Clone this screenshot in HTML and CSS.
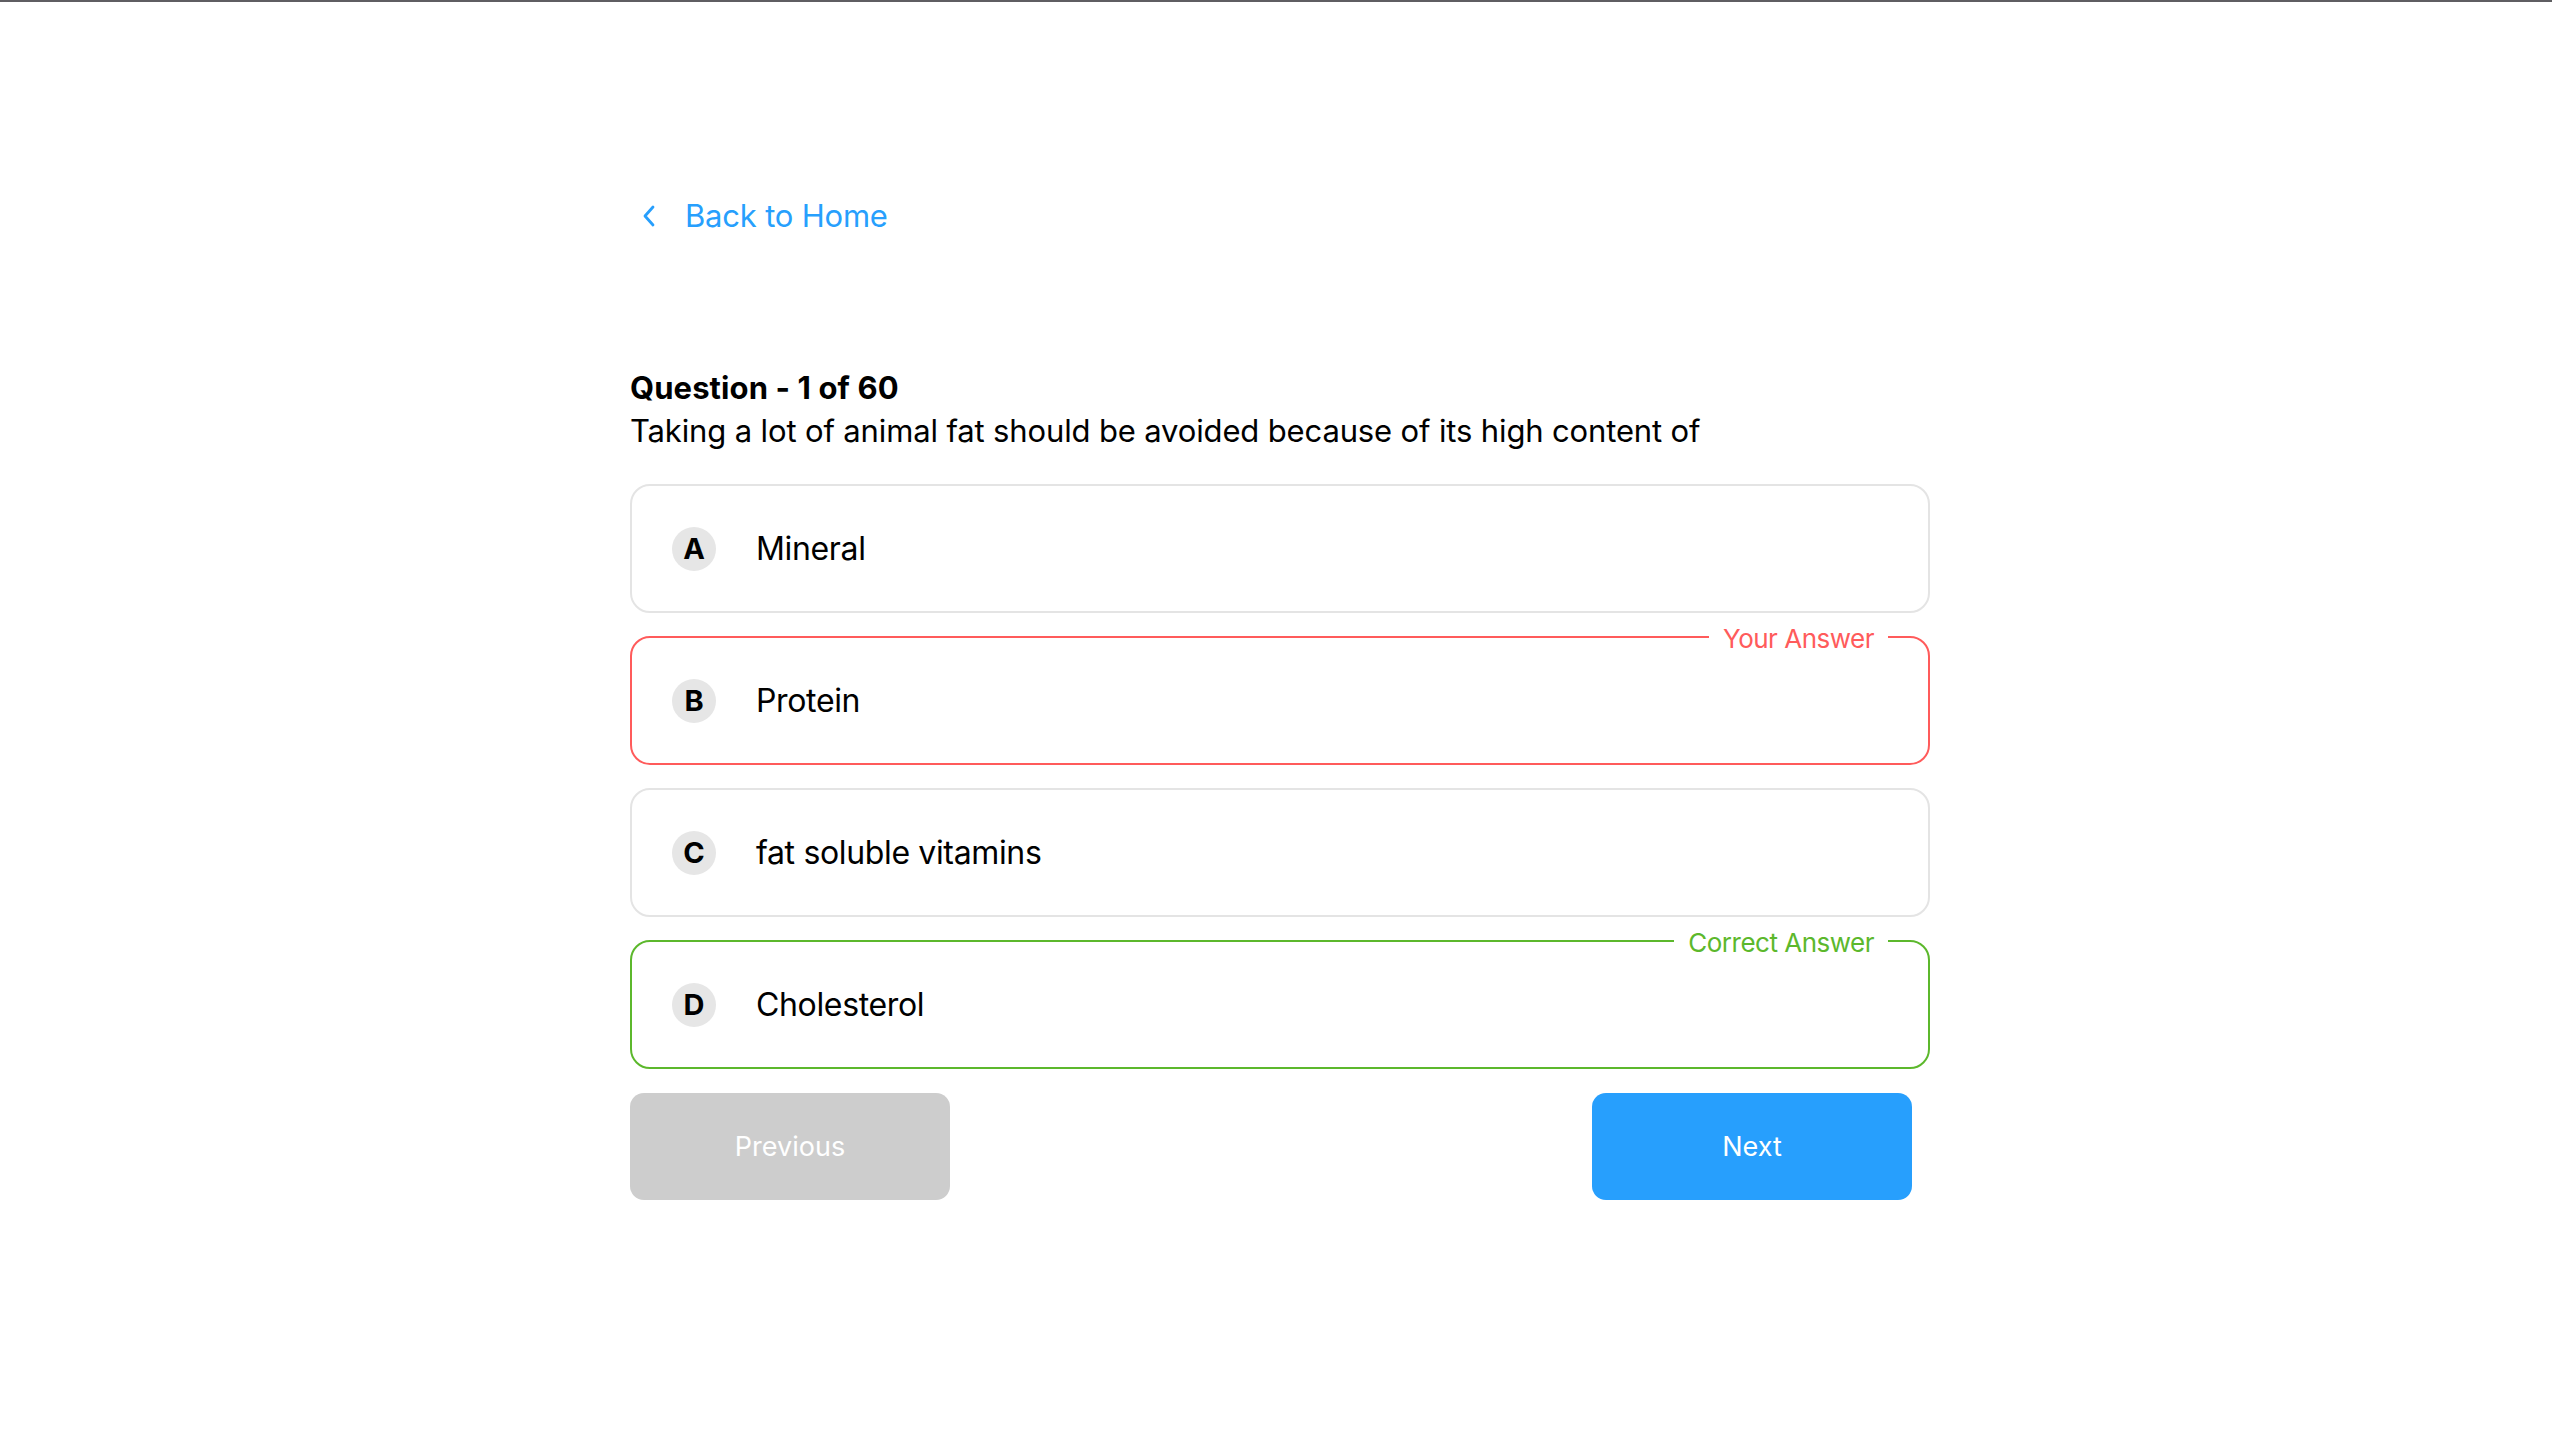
FILE: index.html
```html
<!DOCTYPE html>
<html lang="en">
<head>
<meta charset="utf-8">
<title>Quiz Review</title>
<link rel="stylesheet" href="styles.css">
</head>
<body>
<div class="topbar"></div>
<main class="page">
  <a class="back" href="#">
    <svg class="chev" width="16" height="24" viewBox="0 0 16 24"><polyline points="12,3 4,12 12,21" fill="none" stroke="#279ffd" stroke-width="2.8" stroke-linecap="round" stroke-linejoin="round"/></svg>
    <span>Back to Home</span>
  </a>

  <h1 class="q-title">Question - 1 of 60</h1>
  <p class="q-text">Taking a lot of animal fat should be avoided because of its high content of</p>

  <div class="options">
    <div class="option">
      <span class="letter">A</span><span class="opt-text">Mineral</span>
    </div>
    <div class="option wrong">
      <span class="tag">Your Answer</span>
      <span class="letter">B</span><span class="opt-text">Protein</span>
    </div>
    <div class="option">
      <span class="letter">C</span><span class="opt-text">fat soluble vitamins</span>
    </div>
    <div class="option correct">
      <span class="tag">Correct Answer</span>
      <span class="letter">D</span><span class="opt-text">Cholesterol</span>
    </div>
  </div>

  <div class="nav">
    <button class="btn prev">Previous</button>
    <button class="btn next">Next</button>
  </div>
</main>
</body>
</html>
```
FILE: styles.css
```css
html, body {
  margin: 0;
  padding: 0;
  background: #ffffff;
}
body {
  font-family: Inter, "Noto Sans", sans-serif;
  color: #000;
}
.topbar {
  height: 2px;
  background: #5f5e62;
}
.page {
  width: 1300px;
  margin: 0 auto;
  padding: 194px 0 0 8px;
}
.back {
  display: flex;
  align-items: center;
  height: 40px;
  color: #279ffd;
  text-decoration: none;
  font-size: 31px;
  line-height: 40px;
  letter-spacing: -0.2px;
}
.chev {
  margin-left: 11px;
  margin-right: 28px;
}
.q-title {
  margin: 132px 0 0;
  font-size: 31px;
  line-height: 40px;
  font-weight: 700;
  letter-spacing: 0.1px;
}
.q-text {
  margin: 3px 0 0;
  font-size: 31px;
  line-height: 40px;
  font-weight: 400;
  letter-spacing: -0.14px;
}
.options {
  margin-top: 33px;
  display: flex;
  flex-direction: column;
  gap: 23px;
}
.option {
  position: relative;
  height: 129px;
  box-sizing: border-box;
  border: 2px solid #e4e4e4;
  border-radius: 20px;
  display: flex;
  align-items: center;
  padding-left: 40px;
}
.option.wrong { border-color: #ff5b5b; }
.option.correct { border-color: #5cb82c; }
.letter {
  width: 44px;
  height: 44px;
  border-radius: 50%;
  background: #e6e6e6;
  display: flex;
  align-items: center;
  justify-content: center;
  font-weight: 700;
  font-size: 29px;
  line-height: 1;
}
.opt-text {
  margin-left: 40px;
  font-size: 32px;
  line-height: 40px;
  letter-spacing: -0.35px;
}
.tag {
  position: absolute;
  top: -14px;
  right: 40px;
  padding: 0 14px;
  background: #fff;
  font-size: 26px;
  line-height: 30px;
  letter-spacing: -0.5px;
}
.wrong .tag { color: #ff5b5b; }
.correct .tag { color: #5cb82c; }
.nav {
  margin-top: 24px;
  display: flex;
  justify-content: space-between;
  padding-right: 18px;
}
.btn {
  width: 320px;
  height: 107px;
  border: none;
  border-radius: 14px;
  font-family: Inter, "Noto Sans", sans-serif;
  font-size: 27px;
  color: #fff;
  cursor: pointer;
}
.btn.prev { background: #cdcdcd; }
.btn.next { background: #279ffd; }
```
